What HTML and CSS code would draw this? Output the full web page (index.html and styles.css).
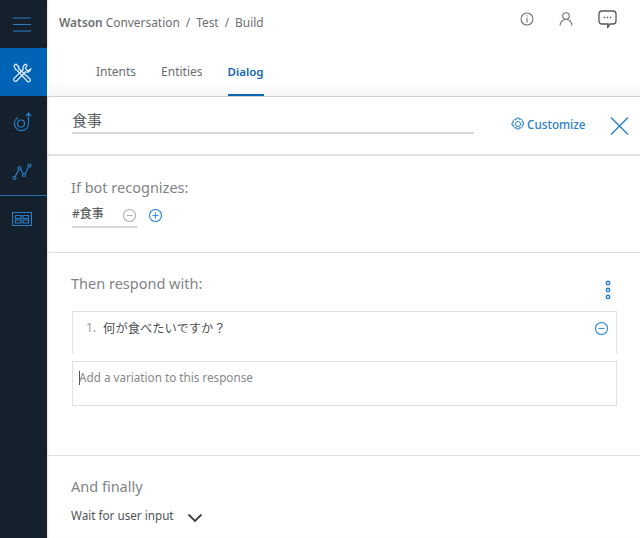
FILE: index.html
```html
<!DOCTYPE html>
<html lang="ja">
<head>
    <meta charset="UTF-8">
    <meta name="viewport" content="width=device-width, initial-scale=1.0">
    <title>Watson Conversation</title>
    <link rel="stylesheet" href="styles.css">
</head>
<body>
    <nav class="sidebar">
        <div class="side-item">
            <svg width="18" height="15" viewBox="0 0 18 15" class="side-icon"><path d="M0 1h18M0 7.500h18M0 14h18"/></svg>
        </div>
        <div class="side-item active nudge">
            <svg width="20" height="20" viewBox="0 0 20 20" class="tools-icon">
                <path d="M2 2.500L4 1l3 3-.5 1.500L18 16a1.800 1.800 0 0 1-2.500 2.500L4.800 7l-1.300-.5z"/>
                <path d="M14 1.200a4 4 0 0 0-2.800 5.300l-9.400 9a2 2 0 0 0 2.700 2.700l9-9.400a4 4 0 0 0 5.300-2.800l-2.300 1.500-2-.5-1-2 1.500-2.500z"/>
            </svg>
        </div>
        <div class="side-item lower">
            <svg width="20" height="20" viewBox="0 0 20 20" class="side-icon">
                <path d="M6 5.500a7 7 0 1 0 10.500 6V1.500M14 4l2.500-3L19 4"/>
                <circle cx="9" cy="11.500" r="3.500"/>
            </svg>
        </div>
        <div class="side-item lined lower">
            <svg width="20" height="18" viewBox="0 0 20 18" class="side-icon">
                <path d="M3 14l4-8M8.500 6l3 5.500M13 11l4-8"/>
                <circle cx="2.500" cy="15" r="1.500"/><circle cx="7.500" cy="5" r="1.500"/><circle cx="12" cy="12" r="1.500"/><circle cx="17.500" cy="2.500" r="1.500"/>
            </svg>
        </div>
        <div class="side-item raise">
            <svg width="20" height="14" viewBox="0 0 20 14" class="side-icon">
                <path d="M.5.500h19v13H.5z"/>
                <path d="M3.500 3.500h5.500v3H3.500zM11 3.500h5.500v3H11zM3.500 8h5.500v3H3.500zM11 8h5.500v3H11z"/>
            </svg>
        </div>
    </nav>

    <main class="main">
        <header class="top-bar">
            <div class="crumbs">
                <b>Watson</b> Conversation<span class="sep">/</span>Test<span class="sep">/</span>Build
            </div>
            <div class="top-icons">
                <svg width="14" height="14" viewBox="0 0 14 14" class="grey-icon"><circle cx="7" cy="7" r="6"/><path d="M7 6v4.500M7 3.300v1.200"/></svg>
                <svg width="14" height="14" viewBox="0 0 14 14" class="grey-icon"><circle cx="7" cy="4" r="3.300"/><path d="M1 13.500c.5-3.500 2.500-6 6-6s5.500 2.500 6 6"/></svg>
                <svg width="19" height="19" viewBox="0 0 19 19" class="chat-icon"><path d="M4 1h11a3 3 0 0 1 3 3v7a3 3 0 0 1-3 3h-3l-2.500 4 .5-4H4a3 3 0 0 1-3-3V4a3 3 0 0 1 3-3z"/><path class="dots" d="M5.800 7.500h1.400M8.800 7.500h1.400M11.800 7.500h1.400"/></svg>
            </div>
        </header>

        <div class="tabs">
            <span class="tab">Intents</span>
            <span class="tab">Entities</span>
            <span class="tab current">Dialog</span>
        </div>

        <section class="title-row">
            <div class="node-name">食事</div>
            <div class="customize">
                <svg width="14" height="14" viewBox="0 0 14 14" class="gear"><circle cx="7" cy="7" r="2.500"/><path d="M5.800 1h2.400l.4 1.600 1.500-.8 1.600 1.600-.8 1.500 1.600.4v2.400l-1.600.4.800 1.500-1.600 1.600-1.500-.8-.4 1.600H5.800l-.4-1.600-1.500.8-1.600-1.600.8-1.500L1 8.200V5.800l1.600-.4-.8-1.500 1.600-1.600 1.500.8z"/></svg>
                <span>Customize</span>
            </div>
            <svg width="19" height="18" viewBox="0 0 19 18" class="close"><path d="M1 .5l17 17M18 .5l-17 17"/></svg>
        </section>

        <section class="block recognizes">
            <h3 class="label">If bot recognizes:</h3>
            <div class="condition">
                <span class="cond-value">#食事</span>
                <svg width="13" height="13" viewBox="0 0 13 13" class="round off"><circle cx="6.500" cy="6.500" r="6"/><path d="M3.500 6.500h6"/></svg>
                <svg width="13" height="13" viewBox="0 0 13 13" class="round on"><circle cx="6.500" cy="6.500" r="6"/><path d="M3.500 6.500h6M6.500 3.500v6"/></svg>
            </div>
        </section>

        <section class="block respond">
            <div class="respond-head">
                <h3 class="label">Then respond with:</h3>
                <svg width="6" height="20" viewBox="0 0 6 20" class="more"><circle cx="3" cy="3" r="1.700"/><circle cx="3" cy="10" r="1.700"/><circle cx="3" cy="17" r="1.700"/></svg>
            </div>
            <div class="response">
                <span class="num">1.</span>
                <span class="response-text">何が食べたいですか？</span>
                <svg width="13" height="13" viewBox="0 0 13 13" class="round on"><circle cx="6.500" cy="6.500" r="6"/><path d="M3.500 6.500h6"/></svg>
            </div>
            <div class="variation"><span class="caret"></span>Add a variation to this response</div>
        </section>

        <section class="block finally">
            <h3 class="label">And finally</h3>
            <div class="wait">
                <span>Wait for user input</span>
                <svg width="16" height="10" viewBox="0 0 16 10" class="chevron"><path d="M1.500 1.500L8 8l6.500-6.500"/></svg>
            </div>
        </section>
    </main>
</body>
</html>
```

FILE: styles.css
```css
body, html {
    margin: 0;
    padding: 0;
    height: 100%;
    overflow: hidden;
}
body {
    display: flex;
    background-color: #fff;
    font-family: "Noto Sans", "Noto Sans CJK JP", sans-serif;
    color: #5a5f62;
}
svg {
    display: block;
    fill: none;
}

/* left nav */
.sidebar {
    width: 47px;
    flex-shrink: 0;
    background-color: #14202c;
}
.side-item {
    height: 48px;
    display: flex;
    align-items: center;
    justify-content: center;
    box-sizing: border-box;
    padding-right: 3px;
}
.side-item.active {
    background-color: #0063b5;
}
.side-item.lined {
    height: 52px;
    border-bottom: 1px solid #1f6fb2;
}
.side-item.nudge {
    padding-top: 2px;
}
.side-item.lower {
    padding-top: 4px;
}
.side-item.raise {
    padding-bottom: 2px;
}
.side-icon {
    stroke: #2a7cc4;
    stroke-width: 1.2;
}
.tools-icon {
    stroke: #e6f0f8;
    stroke-width: 1.2;
}

/* header */
.main {
    flex: 1;
    min-width: 0;
    box-shadow: inset 2px 0 2px -1px #ddd;
}
.top-bar {
    height: 47px;
    box-sizing: border-box;
    padding: 0 12px 3px 12px;
    display: flex;
    align-items: center;
    justify-content: space-between;
}
.crumbs {
    font-size: 11.9px;
    color: #6b6f72;
}
.crumbs b {
    font-weight: 600;
}
.sep {
    margin: 0 6px;
}
.top-icons {
    display: flex;
    align-items: center;
    gap: 25px;
    padding-right: 11px;
    margin-bottom: 6px;
}
.grey-icon {
    stroke: #6f7376;
    stroke-width: 1.1;
}
.chat-icon {
    stroke: #55595c;
    stroke-width: 1.3;
}
.chat-icon .dots {
    stroke-width: 1.5;
}

.tabs {
    height: 50px;
    box-sizing: border-box;
    padding-left: 49px;
    display: flex;
    gap: 25px;
    border-bottom: 1px solid #d0d3d4;
    background: linear-gradient(#fff 70%, #f6f6f6);
}
.tab {
    font-size: 12px;
    line-height: 49px;
    color: #6b6f72;
}
.tab.current {
    height: 49px;
    box-sizing: border-box;
    font-size: 11.5px;
    color: #1265b5;
    font-weight: 600;
    border-bottom: 2px solid #0f64b4;
}

/* node name */
.title-row {
    height: 59px;
    box-sizing: border-box;
    display: flex;
    align-items: flex-start;
    padding: 13px 11px 0 25px;
    border-bottom: 2px solid #dfe1e2;
}
.node-name {
    width: 402px;
    height: 22px;
    font-size: 15px;
    line-height: 20px;
    border-bottom: 2px solid #d5d7d8;
    color: #5c6063;
}
.customize {
    margin-left: 37px;
    margin-top: 6px;
    display: flex;
    align-items: center;
    gap: 2px;
    font-size: 11.7px;
    font-weight: 500;
    color: #2a80c9;
}
.gear {
    stroke: #2a80c9;
    stroke-width: 1;
}
.close {
    margin-left: auto;
    margin-top: 7px;
    stroke: #2a80c9;
    stroke-width: 1.4;
}

/* sections */
.block {
    box-sizing: border-box;
    padding: 0 23px 0 25px;
    border-bottom: 1px solid #dfe1e2;
}
.label {
    margin: 0 0 0 -1px;
    font-size: 14.5px;
    font-weight: 400;
    line-height: 20px;
    color: #808487;
}
.recognizes {
    height: 97px;
    padding-top: 21px;
}
.condition {
    margin-top: 7px;
    display: flex;
    align-items: center;
}
.condition .round {
    margin-top: -2px;
}
.cond-value {
    width: 65px;
    height: 24px;
    box-sizing: border-box;
    font-size: 12px;
    line-height: 20px;
    font-weight: 500;
    border-bottom: 2px solid #d5d7d8;
    margin-right: -14px;
}
.round {
    stroke-width: 1.2;
    flex-shrink: 0;
}
.round.off {
    stroke: #b4b8ba;
    margin-right: 13px;
}
.round.on {
    stroke: #3a8fd6;
}
.respond {
    height: 203px;
    padding-top: 20px;
}
.respond-head {
    display: flex;
    justify-content: space-between;
    padding-right: 6px;
}
.more {
    margin-top: 7px;
    stroke: #2a80c9;
    stroke-width: 1.5;
}
.response {
    margin-top: 11px;
    height: 43px;
    box-sizing: border-box;
    border: 1px solid #e0e1e2;
    border-bottom: 0;
    display: flex;
    align-items: flex-start;
    padding: 8px 8px 0 13px;
}
.num {
    font-size: 12px;
    line-height: 15px;
    color: #95999b;
    margin-right: 7px;
}
.response-text {
    flex: 1;
    font-size: 12.3px;
    line-height: 18px;
    color: #4c5053;
}
.response .round {
    margin-top: 2px;
}
.variation {
    margin-top: 7px;
    height: 45px;
    box-sizing: border-box;
    border: 1px solid #dfe1e2;
    padding: 7px 6px;
    font-size: 11.7px;
    line-height: 16px;
    color: #83878a;
}
.caret {
    display: inline-block;
    width: 1px;
    height: 14px;
    margin-bottom: -3px;
    margin-right: -1px;
    background-color: #555;
}
.finally {
    border-bottom: 0;
    padding-top: 20px;
}
.wait {
    margin-top: 10px;
    display: flex;
    align-items: center;
    gap: 13px;
    margin-left: -1px;
    font-size: 11.7px;
    color: #4f5356;
}
.chevron {
    margin-top: 7px;
    stroke: #3c4043;
    stroke-width: 1.8;
}
```
